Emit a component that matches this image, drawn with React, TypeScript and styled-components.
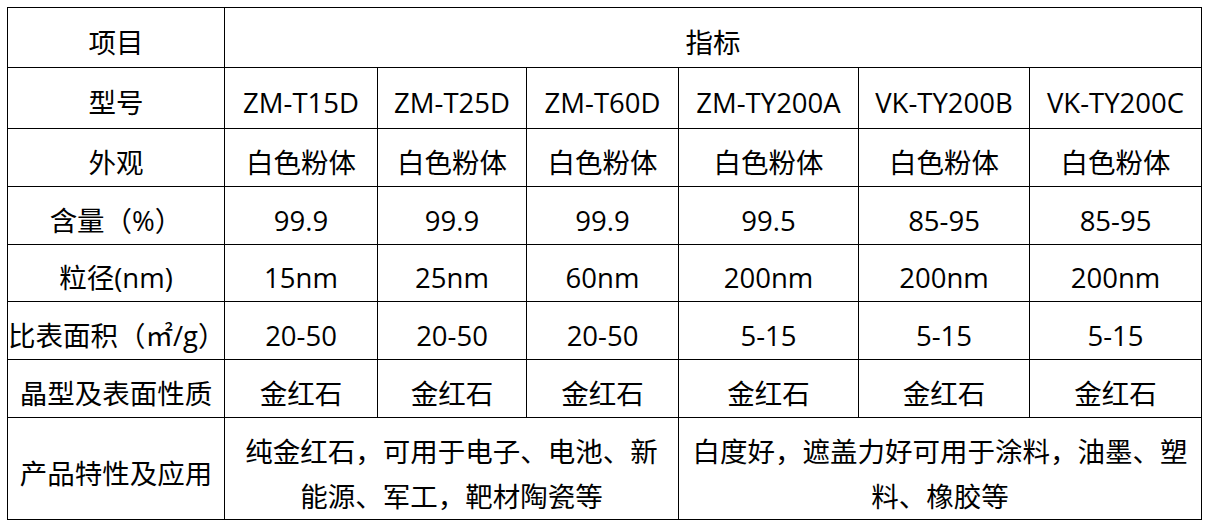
import styled, { createGlobalStyle } from "styled-components";

const GlobalStyle = createGlobalStyle`
  body {
    margin: 0;
    background: #fff;
    font-family: "Open Sans", "Noto Sans CJK SC", sans-serif;
    color: #000;
  }
`;

const models = ["ZM-T15D", "ZM-T25D", "ZM-T60D", "ZM-TY200A", "VK-TY200B", "VK-TY200C"];

const rows = [
  { label: "外观", height: 58, values: Array(6).fill("白色粉体") },
  { label: "含量（%）", height: 58, values: ["99.9", "99.9", "99.9", "99.5", "85-95", "85-95"] },
  { label: "粒径(nm)", height: 57, values: ["15nm", "25nm", "60nm", "200nm", "200nm", "200nm"] },
  { label: "比表面积（㎡/g）", height: 58, values: ["20-50", "20-50", "20-50", "5-15", "5-15", "5-15"] },
  { label: "晶型及表面性质", height: 58, values: Array(6).fill("金红石") },
];

const colWidths = [217, 153, 149, 152, 180, 171, 172];

export default function App() {
  return (
    <Page>
      <GlobalStyle />
      <Table>
        <colgroup>
          {colWidths.map((w, i) => (
            <col key={i} style={{ width: w }} />
          ))}
        </colgroup>
        <tbody>
          <Row $h={60}>
            <Cell>项目</Cell>
            <Cell colSpan={6}>指标</Cell>
          </Row>
          <Row $h={61}>
            <Cell>型号</Cell>
            {models.map((m) => (
              <Cell key={m}>{m}</Cell>
            ))}
          </Row>
          {rows.map((r) => (
            <Row key={r.label} $h={r.height}>
              <Cell>{r.label}</Cell>
              {r.values.map((v, i) => (
                <Cell key={i}>{v}</Cell>
              ))}
            </Row>
          ))}
          <Row $h={102}>
            <Cell>产品特性及应用</Cell>
            <WrapCell colSpan={3} $pad={18}>
              纯金红石，可用于电子、电池、新能源、军工，靶材陶瓷等
            </WrapCell>
            <WrapCell colSpan={3} $pad={6}>
              白度好，遮盖力好可用于涂料，油墨、塑料、橡胶等
            </WrapCell>
          </Row>
        </tbody>
      </Table>
    </Page>
  );
}

const Page = styled.div`
  padding: 7px;
`;

const Table = styled.table`
  border-collapse: collapse;
  table-layout: fixed;
  width: 1195px;
`;

const Row = styled.tr<{ $h: number }>`
  height: ${(p) => p.$h}px;
`;

const Cell = styled.td`
  border: 1px solid #000;
  padding: 9px 0 0;
  text-align: center;
  vertical-align: middle;
  font-size: 27.5px;
  line-height: 1.2;
  white-space: nowrap;
`;

const WrapCell = styled(Cell)<{ $pad: number }>`
  white-space: normal;
  line-height: 45px;
  padding: 10px ${(p) => p.$pad}px 0;
`;
